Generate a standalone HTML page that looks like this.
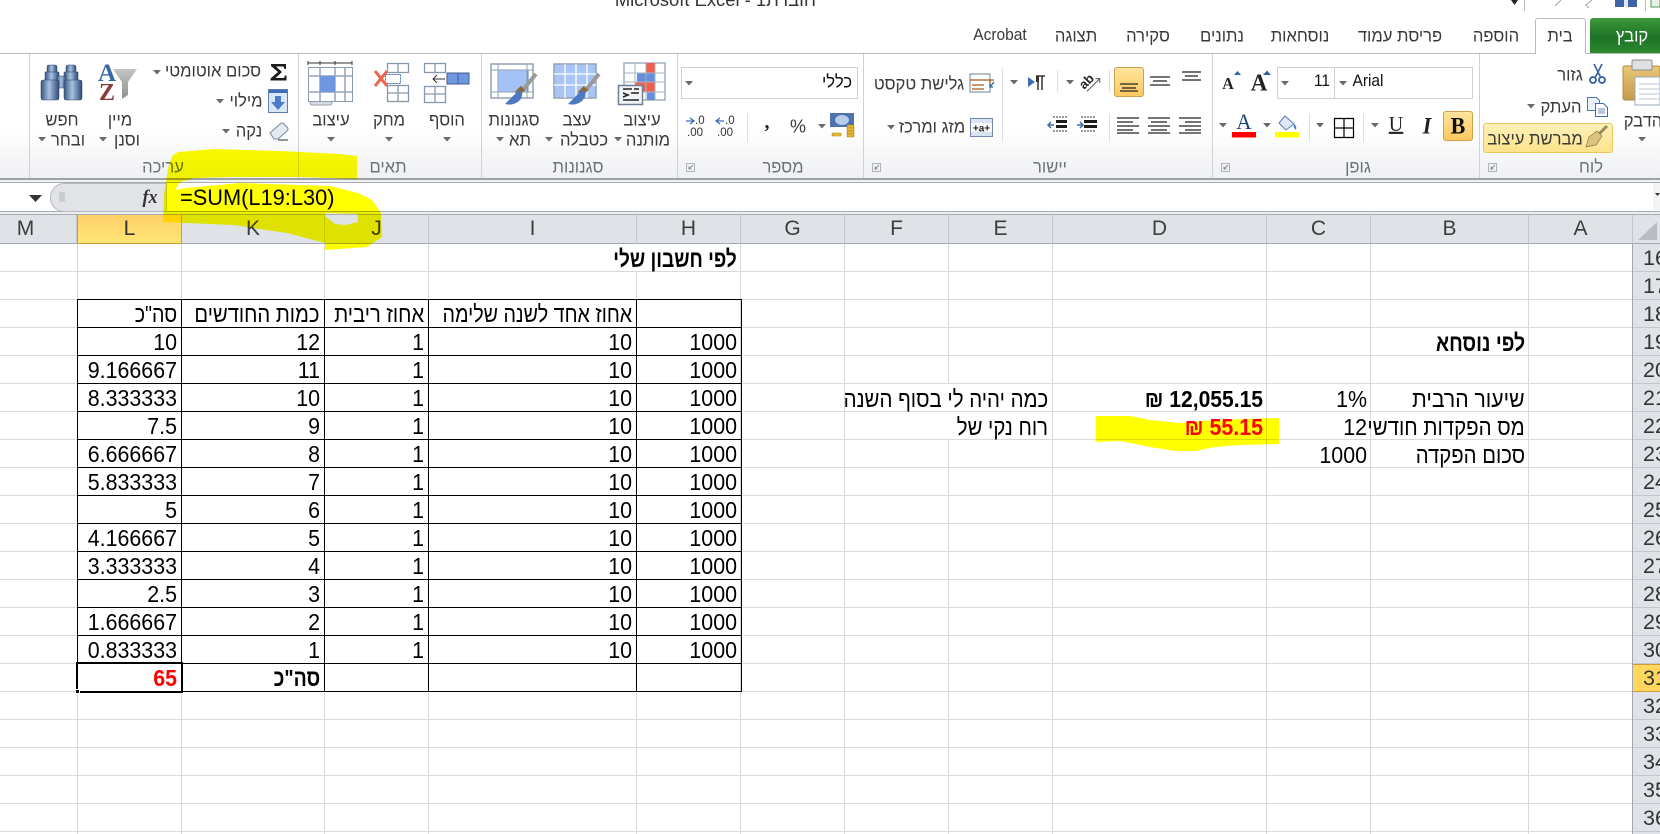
<!DOCTYPE html>
<html lang="he"><head><meta charset="utf-8"><title>Excel</title>
<style>
html,body{margin:0;padding:0;width:1660px;height:834px;overflow:hidden;background:#fff}
body{position:relative;font-family:"Liberation Sans","Noto Sans CJK SC",sans-serif}
div,span,table{box-sizing:border-box}
.x{position:absolute}
.c{position:absolute;white-space:nowrap;transform:translate(-50%,-50%) scaleY(1.05);font-size:16.6px;line-height:18px;color:#3a3a3a;direction:rtl}
.la{font-size:15.5px}
.g{color:#6d7278}
.v{position:absolute;top:244px;height:590px;width:1px;background:#d9d9d9}
.ch{position:absolute;top:215px;height:29px;background:#dfe2e6;border-right:1px solid #c3c6ca;border-bottom:1px solid #a6aaae;color:#3d3d3d;font-size:21px;line-height:28px;text-align:center}
.rh{height:28px;background:#dfe2e6;border-bottom:1px solid #c3c6ca;padding-left:10px;font-size:21.5px;line-height:28px;color:#333;white-space:nowrap}
.s{position:absolute;white-space:nowrap;font-size:21.4px;line-height:28px;height:28px;margin-top:1px;color:#000;direction:rtl;transform:scale(var(--x,1),1.1);transform-origin:100% 70%}
table{position:absolute;left:77px;top:299px;border-collapse:collapse;table-layout:fixed;width:664px;font-size:21.4px;direction:ltr}
td{border:1px solid #000;height:27px;padding:0 4px 0 0;text-align:right;line-height:27px;white-space:nowrap;direction:rtl}
td i{font-style:normal;display:inline-block;position:relative;top:2px;transform:scale(var(--x,1),1.1);transform-origin:100% 70%}
</style></head><body>

<div class="x" style="right:844px;top:-11px;font-size:18.4px;line-height:22px;color:#333;direction:rtl;white-space:nowrap">חוברת1 - Microsoft Excel</div>

<div class="x" style="left:0;top:53px;width:1660px;height:125px;background:linear-gradient(#fff 0,#fff 60%,#eff0f2 100%);border-top:1px solid #b9b9b9"></div>
<div class="x" style="left:0;top:178px;width:1660px;height:2px;background:#9da1a5"></div>
<div class="x" style="left:0;top:180px;width:1660px;height:2px;background:#f0f1f2"></div>
<div class="x" style="left:0;top:182px;width:1660px;height:30px;background:#fff;border-top:1px solid #a9adb1;border-bottom:1px solid #a9adb1"></div>
<div class="x" style="left:0;top:212px;width:1660px;height:3px;background:#eceef0;border-bottom:1px solid #a9adb1"></div>

<div class="x" style="left:1590px;top:18px;width:70px;height:35px;background:linear-gradient(#3c9a3c,#1f7226 55%,#2a8a2e);border-radius:3px 0 0 0"></div>
<div class="x" style="left:1535px;top:18px;width:51px;height:36px;background:#fff;border:1px solid #b9b9b9;border-bottom:0;border-radius:3px 3px 0 0"></div>
<span class="c" style="left:1632px;top:36px;color:#fff">קובץ</span>
<span class="c" style="left:1560px;top:36px">בית</span>
<span class="c" style="left:1496px;top:36px">הוספה</span>
<span class="c" style="left:1400px;top:36px">פריסת עמוד</span>
<span class="c" style="left:1300px;top:36px">נוסחאות</span>
<span class="c" style="left:1222px;top:36px">נתונים</span>
<span class="c" style="left:1148px;top:36px">סקירה</span>
<span class="c" style="left:1076px;top:36px">תצוגה</span>
<span class="c la" style="left:1000px;top:36px;direction:ltr">Acrobat</span>

<span class="c" style="left:213px;top:71px">סכום אוטומטי</span>
<span class="c" style="left:246px;top:101px">מילוי</span>
<span class="c" style="left:249px;top:131px">נקה</span>
<span class="c" style="left:120px;top:120px">מיין</span>
<span class="c" style="left:127px;top:140px">וסנן</span>
<span class="c" style="left:62px;top:120px">חפש</span>
<span class="c" style="left:68px;top:140px">ובחר</span>
<span class="c g" style="left:163px;top:167px">עריכה</span>
<span class="c" style="left:331px;top:120px">עיצוב</span>
<span class="c" style="left:389px;top:120px">מחק</span>
<span class="c" style="left:447px;top:120px">הוסף</span>
<span class="c g" style="left:388px;top:167px">תאים</span>
<span class="c" style="left:514px;top:120px">סגנונות</span>
<span class="c" style="left:520px;top:140px">תא</span>
<span class="c" style="left:577px;top:120px">עצב</span>
<span class="c" style="left:584px;top:140px">כטבלה</span>
<span class="c" style="left:642px;top:120px">עיצוב</span>
<span class="c" style="left:648px;top:140px">מותנה</span>
<span class="c g" style="left:578px;top:167px">סגנונות</span>

<div class="x" style="left:681px;top:67px;width:177px;height:32px;background:#fff;border:1px solid #cdd1d6"></div>
<span class="c" style="left:837px;top:82px;color:#111">כללי</span>
<span class="c" style="left:798px;top:126px;font-size:18px;direction:ltr">%</span>
<span class="c" style="left:767px;top:122px;font:bold 20px 'Liberation Serif',serif;color:#222">,</span>
<span class="c g" style="left:783px;top:167px">מספר</span>

<span class="c" style="left:919px;top:84px">גלישת טקסט</span>
<span class="c" style="left:932px;top:127px">מזג ומרכז</span>
<span class="c g" style="left:1050px;top:167px">יישור</span>

<div class="x" style="left:1114px;top:67px;width:30px;height:30px;background:linear-gradient(#fee49c,#fdc95f);border:1px solid #c9a24f;border-radius:3px"></div>
<div class="x" style="left:1443px;top:111px;width:30px;height:30px;background:linear-gradient(#fee49c,#fdc95f);border:1px solid #c9a24f;border-radius:3px"></div>
<div class="x" style="left:1483px;top:123px;width:130px;height:30px;background:linear-gradient(#fdf0b8,#fde38c);border:1px solid #e9c95f;border-radius:3px"></div>

<div class="x" style="left:1277px;top:67px;width:196px;height:32px;background:#fff;border:1px solid #cdd1d6"></div>
<div class="x" style="left:1334px;top:67px;width:1px;height:32px;background:#cdd1d6"></div>
<span class="c la" style="left:1322px;top:82px;color:#111;direction:ltr">11</span>
<span class="c la" style="left:1368px;top:82px;color:#111;direction:ltr">Arial</span>
<span class="c" style="left:1458px;top:126px;font:bold 22px 'Liberation Serif',serif;color:#111;direction:ltr">B</span>
<span class="c" style="left:1427px;top:126px;font:italic bold 22px 'Liberation Serif',serif;color:#222;direction:ltr">I</span>
<span class="c" style="left:1396px;top:125px;font:20px 'Liberation Serif',serif;color:#222;direction:ltr;text-decoration:underline">U</span>
<span class="c" style="left:1244px;top:122px;font:21px 'Liberation Serif',serif;color:#1d3f7a;direction:ltr">A</span>
<span class="c" style="left:1228px;top:85px;font:bold 16px 'Liberation Serif',serif;color:#222;direction:ltr">A</span>
<span class="c" style="left:1259px;top:83px;font:bold 23px 'Liberation Serif',serif;color:#222;direction:ltr">A</span>
<span class="c g" style="left:1358px;top:167px">גופן</span>

<span class="c" style="left:1570px;top:75px">גזור</span>
<span class="c" style="left:1561px;top:107px">העתק</span>
<span class="c" style="left:1535px;top:139px">מברשת עיצוב</span>
<span class="c" style="left:1643px;top:121px">הדבק</span>
<span class="c g" style="left:1591px;top:167px">לוח</span>

<div class="x" style="left:50px;top:183px;width:116px;height:29px;background:#e1e3e6;border:1px solid #b5b8bc;border-right:0;border-radius:14px 0 0 14px"></div>
<div class="x" style="left:59px;top:192px;width:6px;height:10px;background:#c8cbcf;border-radius:2px"></div>
<span class="c" style="left:150px;top:197px;font:italic bold 18px 'Liberation Serif',serif;color:#333;direction:ltr">fx</span>
<div class="x" style="left:166px;top:183px;width:1px;height:29px;background:#c3c6ca"></div>
<div class="x" style="left:180px;top:185px;font-size:21.8px;line-height:26px;color:#000;white-space:nowrap">=SUM(L19:L30)</div>

<div class="ch" style="left:0;width:77px;padding-right:25px">M</div>
<div class="ch" style="left:77px;width:105px;background:linear-gradient(#fdd06a,#ffe574);border:1px solid #d29b3a;border-top:0;color:#333">L</div>
<div class="ch" style="left:182px;width:143px">K</div>
<div class="ch" style="left:325px;width:104px">J</div>
<div class="ch" style="left:429px;width:208px">I</div>
<div class="ch" style="left:637px;width:104px">H</div>
<div class="ch" style="left:741px;width:104px">G</div>
<div class="ch" style="left:845px;width:104px">F</div>
<div class="ch" style="left:949px;width:104px">E</div>
<div class="ch" style="left:1053px;width:214px">D</div>
<div class="ch" style="left:1267px;width:104px">C</div>
<div class="ch" style="left:1371px;width:158px">B</div>
<div class="ch" style="left:1529px;width:104px">A</div>
<div class="ch" style="left:1633px;width:27px;border-right:0"></div>

<div class="x" style="left:0;top:244px;width:1632px;height:590px;background:repeating-linear-gradient(to bottom,#fff 0,#fff 27px,#d9d9d9 27px,#d9d9d9 28px)"></div>
<div class="v" style="left:77px"></div><div class="v" style="left:181px"></div><div class="v" style="left:324px"></div><div class="v" style="left:428px"></div><div class="v" style="left:636px"></div><div class="v" style="left:740px"></div><div class="v" style="left:844px"></div><div class="v" style="left:948px"></div><div class="v" style="left:1052px"></div><div class="v" style="left:1266px"></div><div class="v" style="left:1370px"></div><div class="v" style="left:1528px"></div>
<div class="x" style="left:636px;top:244px;width:1px;height:27px;background:#fff"></div>
<div class="x" style="left:948px;top:384px;width:1px;height:27px;background:#fff"></div>
<div class="x" style="left:948px;top:412px;width:1px;height:27px;background:#fff"></div>

<div class="x" style="left:1632px;top:244px;width:28px;height:590px;overflow:hidden;border-left:1px solid #a4a8ac;background:#dfe2e6">
<div class="rh">16</div><div class="rh">17</div><div class="rh">18</div><div class="rh">19</div><div class="rh">20</div><div class="rh">21</div><div class="rh">22</div><div class="rh">23</div><div class="rh">24</div><div class="rh">25</div><div class="rh">26</div><div class="rh">27</div><div class="rh">28</div><div class="rh">29</div><div class="rh">30</div><div class="rh" style="background:#ffd75e;border-top:1px solid #cf9a38;border-bottom:1px solid #cf9a38;line-height:26px">31</div><div class="rh">32</div><div class="rh">33</div><div class="rh">34</div><div class="rh">35</div><div class="rh">36</div>
</div>

<span class="s" style="right:923px;top:245px;font-weight:bold;--x:.89">לפי חשבון שלי</span>
<span class="s" style="right:135px;top:329px;font-weight:bold;--x:.91">לפי נוסחא</span>
<span class="s" style="right:135px;top:385px;--x:.99">שיעור הרבית</span>
<span class="s" style="right:293px;top:385px;direction:ltr">1%</span>
<span class="s" style="right:397px;top:385px;direction:ltr;font-weight:bold;--x:.985">₪ 12,055.15</span>
<span class="s" style="right:612px;top:385px;--x:.955">כמה יהיה לי בסוף השנה</span>
<span class="s" style="right:135px;top:413px;--x:.955">מס הפקדות חודשי</span>
<span class="s" style="right:293px;top:413px;direction:ltr">12</span>
<span class="s" style="right:397px;top:413px;direction:ltr;font-weight:bold;color:#f00">₪ 55.15</span>
<span class="s" style="right:612px;top:413px;--x:.95">רוח נקי של</span>
<span class="s" style="right:135px;top:441px;--x:.95">סכום הפקדה</span>
<span class="s" style="right:293px;top:441px;direction:ltr">1000</span>

<table>
<colgroup><col style="width:104px"><col style="width:143px"><col style="width:104px"><col style="width:208px"><col style="width:105px"></colgroup>
<tr><td><i style="--x:.92">סה"כ</i></td><td><i style="--x:.944">כמות החודשים</i></td><td><i style="--x:.945">אחוז ריבית</i></td><td><i style="--x:.92">אחוז אחד לשנה שלימה</i></td><td></td></tr>
<tr><td><i>10</i></td><td><i>12</i></td><td><i>1</i></td><td><i>10</i></td><td><i>1000</i></td></tr>
<tr><td><i>9.166667</i></td><td><i>11</i></td><td><i>1</i></td><td><i>10</i></td><td><i>1000</i></td></tr>
<tr><td><i>8.333333</i></td><td><i>10</i></td><td><i>1</i></td><td><i>10</i></td><td><i>1000</i></td></tr>
<tr><td><i>7.5</i></td><td><i>9</i></td><td><i>1</i></td><td><i>10</i></td><td><i>1000</i></td></tr>
<tr><td><i>6.666667</i></td><td><i>8</i></td><td><i>1</i></td><td><i>10</i></td><td><i>1000</i></td></tr>
<tr><td><i>5.833333</i></td><td><i>7</i></td><td><i>1</i></td><td><i>10</i></td><td><i>1000</i></td></tr>
<tr><td><i>5</i></td><td><i>6</i></td><td><i>1</i></td><td><i>10</i></td><td><i>1000</i></td></tr>
<tr><td><i>4.166667</i></td><td><i>5</i></td><td><i>1</i></td><td><i>10</i></td><td><i>1000</i></td></tr>
<tr><td><i>3.333333</i></td><td><i>4</i></td><td><i>1</i></td><td><i>10</i></td><td><i>1000</i></td></tr>
<tr><td><i>2.5</i></td><td><i>3</i></td><td><i>1</i></td><td><i>10</i></td><td><i>1000</i></td></tr>
<tr><td><i>1.666667</i></td><td><i>2</i></td><td><i>1</i></td><td><i>10</i></td><td><i>1000</i></td></tr>
<tr><td><i>0.833333</i></td><td><i>1</i></td><td><i>1</i></td><td><i>10</i></td><td><i>1000</i></td></tr>
<tr><td style="color:#f00;font-weight:bold"><i>65</i></td><td style="font-weight:bold"><i style="--x:.91">סה"כ</i></td><td></td><td></td><td></td></tr>
</table>
<div class="x" style="left:76px;top:662px;width:107px;height:31px;border:2px solid #000;box-shadow:inset 0 0 0 1px #fff"></div>
<div class="x" style="left:75px;top:689px;width:5px;height:5px;background:#000;border:1px solid #fff"></div>

<svg class="x" style="left:0;top:0" width="1660" height="834" viewBox="0 0 1660 834" xmlns="http://www.w3.org/2000/svg">
<defs>
<path id="a" d="M-4-2h8l-4 4.500z" fill="#6a6a6a"/>
<g id="l"><rect x=".5" y=".5" width="8" height="8" fill="none" stroke="#b0b3b7"/><path d="M7 2L3 6M3 3.500V6H5.500" fill="none" stroke="#8a8d91"/></g>
<linearGradient id="bn" x1="0" x2="1" y1="0" y2="0"><stop offset="0" stop-color="#36557f"/><stop offset=".45" stop-color="#a9c1e2"/><stop offset="1" stop-color="#2e4a78"/></linearGradient>
<linearGradient id="fn" x1="0" x2="0" y1="0" y2="1"><stop offset="0" stop-color="#c3c6c2"/><stop offset="1" stop-color="#8d918c"/></linearGradient>
<linearGradient id="gold" x1="0" x2="0" y1="0" y2="1"><stop offset="0" stop-color="#e9c877"/><stop offset="1" stop-color="#c49a4a"/></linearGradient>
</defs>

<path d="M1511 0h7l-3.500 5z" fill="#222"/><path d="M1524.500 0v11" stroke="#bbb"/>
<path d="M1561 0l-6 6M1592 0l-6 5 3 3" stroke="#9aa" fill="none"/>
<rect x="1615" y="-4" width="22" height="11" fill="#3f62a8"/><rect x="1624" y="0" width="4" height="7" fill="#dfe8f5"/>
<path d="M1645.500 0v11" stroke="#bbb"/><rect x="1651" y="-3" width="9" height="10" fill="#e8f3e8" stroke="#4a9a4a"/>

<g stroke="#d0d3d6"><path d="M29.500 54v124M298.500 54v124M481.500 54v124M677.500 54v124M863.500 54v124M1212.500 54v124M1479.500 54v124"/>
<path d="M1002.500 68v74M1057.500 70v22M1109.500 70v22M1109.500 114v28M747.500 114v28M1309.500 114v28M1363.500 114v28" stroke="#dcdee1"/></g>

<use href="#a" x="157" y="72"/><use href="#a" x="220" y="101"/><use href="#a" x="226" y="131"/><use href="#a" x="103" y="139"/><use href="#a" x="42" y="139"/><use href="#a" x="331" y="139"/><use href="#a" x="389" y="139"/><use href="#a" x="447" y="139"/><use href="#a" x="500" y="139"/><use href="#a" x="549" y="139"/><use href="#a" x="618" y="139"/><use href="#a" x="689" y="83"/><use href="#a" x="822" y="126"/><use href="#a" x="1014" y="82"/><use href="#a" x="1070" y="82"/><use href="#a" x="891" y="127"/><use href="#a" x="1285" y="83"/><use href="#a" x="1343" y="83"/><use href="#a" x="1375" y="125"/><use href="#a" x="1320" y="125"/><use href="#a" x="1267" y="125"/><use href="#a" x="1223" y="125"/><use href="#a" x="1531" y="106"/><use href="#a" x="1642" y="139"/>
<path d="M29 195h13l-6.500 7z" fill="#333"/>

<use href="#l" x="686" y="163"/><use href="#l" x="872" y="163"/><use href="#l" x="1221" y="163"/><use href="#l" x="1488" y="163"/>

<path d="M271 64h15v5h-1.500l-1-2.500h-7.500l6 5.500-6.500 6h8.500l1-2.500h1.500v5h-16v-2l7.500-6.500-7-6z" fill="#1c1c1c"/>
<rect x="268.500" y="89.500" width="19" height="23" fill="#d9e6f7" stroke="#5b7fae"/><rect x="269" y="90" width="18" height="3" fill="#3e6db5"/>
<path d="M275 96h6v6h4l-7 8-7-8h4z" fill="#4a7cc7"/>
<path d="M270 133l10-9q2-2 4 0l3 3q2 2 0 4l-9 8h-4z" fill="#e3e9f1" stroke="#7c8a9c"/><path d="M278 140h10" stroke="#333"/>
<text x="98" y="81" font-family="Liberation Serif" font-weight="bold" font-size="25" fill="#3a66a8">A</text>
<text x="99" y="100" font-family="Liberation Serif" font-weight="bold" font-size="24" fill="#8c3b3b">Z</text>
<path d="M113 69h24l-9 13v13l-6 4V82z" fill="url(#fn)"/>
<g fill="url(#bn)" stroke="#2d4468" stroke-width=".5"><rect x="47" y="65" width="10" height="14" rx="2"/><rect x="66" y="65" width="10" height="14" rx="2"/><rect x="45" y="72" width="14" height="10"/><rect x="64" y="72" width="14" height="10"/><rect x="57" y="76" width="9" height="12"/><rect x="41" y="80" width="18" height="20" rx="2"/><rect x="64" y="80" width="18" height="20" rx="2"/></g>

<path d="M308 63h44M308 61v4M320 61v4M335 61v4M352 61v4" stroke="#333" fill="none"/>
<rect x="310" y="101" width="22" height="4" rx="2" fill="#d5dae2" stroke="#97a3b3"/>
<rect x="308.500" y="67.500" width="44" height="34" fill="#fff" stroke="#8b9bb0"/>
<path d="M308 76h44M308 92h44M320 68v34M335 68v34M345 68v34" stroke="#95a4b8" stroke-width="1.500"/>
<rect x="320" y="76" width="15" height="16" fill="#6f97e0"/>

<g fill="#fff" stroke="#8798ae" stroke-width="1.300"><rect x="387.500" y="63.500" width="21" height="9"/><path d="M398 63v10"/><rect x="387.500" y="85.500" width="21" height="16"/><path d="M398 85v16M387 93h21"/></g>
<rect x="385.500" y="74.500" width="15" height="9" fill="none" stroke="#3e6db5" stroke-dasharray="2 1"/>
<path d="M375 71l12 15M387 71l-12 15" stroke="#f1624e" stroke-width="3"/>
<g fill="#fff" stroke="#8798ae" stroke-width="1.300"><rect x="424.500" y="63.500" width="21" height="9"/><path d="M435 63v10"/><rect x="424.500" y="86.500" width="21" height="16"/><path d="M435 86v16M424 94h21"/></g>
<rect x="447" y="73" width="22" height="11" fill="#6f97e0" stroke="#3f5f93"/><path d="M458 73v11" stroke="#3f5f93"/>
<path d="M433 79h12M437 75l-4 4 4 4" stroke="#333" fill="none"/>

<rect x="491" y="64" width="42" height="34" fill="#fff" stroke="#92a2b6" stroke-width="1.500"/>
<rect x="498" y="70" width="30" height="22" fill="#a4c2f6" stroke="#5f86c9"/>
<path d="M491 70h42M491 92h42M498 64v34M527 64v34" stroke="#92a2b6"/>
<path d="M536 74l-14 17" stroke="#9b9b96" stroke-width="4"/><path d="M523 88l-6 6" stroke="#8a6a3a" stroke-width="6"/><path d="M519 90l-14 14q8 2 14-3 4-4 3-9z" fill="#4d79c2"/>
<rect x="554" y="64" width="42" height="34" fill="#a9c5f5" stroke="#92a2b6" stroke-width="1.500"/>
<path d="M554 74h42M554 85h42M565 64v34M576 64v34M587 64v34" stroke="#fff" stroke-width="1.300"/>
<path d="M599 74l-14 17" stroke="#9b9b96" stroke-width="4"/><path d="M586 88l-6 6" stroke="#8a6a3a" stroke-width="6"/><path d="M582 90l-14 14q8 2 14-3 4-4 3-9z" fill="#4d79c2"/>
<rect x="624" y="63" width="41" height="37" fill="#fff" stroke="#92a2b6" stroke-width="1.300"/>
<rect x="646" y="63" width="9" height="10" fill="#f2604c"/><rect x="637" y="73" width="18" height="9" fill="#6690dc"/><rect x="635" y="82" width="20" height="10" fill="#f2604c"/><rect x="647" y="92" width="8" height="8" fill="#6690dc"/>
<path d="M624 73h41M624 82h41M624 92h41M635 63v37M646 63v37M655 63v37" stroke="#a5b2c2"/>
<rect x="618.500" y="85.500" width="24" height="19" fill="#f3f4f6" stroke="#6e7f96" stroke-width="1.500"/>
<path d="M623 89h9M634 89h5M623 93l5 2-5 2M631 93h8M623 100h16" stroke="#222" stroke-width="1.500" fill="none"/>

<rect x="830" y="113" width="24" height="14" fill="#4a73b0"/><ellipse cx="842" cy="120" rx="7" ry="5" fill="#b7cce8"/>
<g fill="#e7b836" stroke="#a97f1d" stroke-width=".6"><rect x="847" y="125" width="7" height="3" rx="1"/><rect x="847" y="128" width="7" height="3" rx="1"/><rect x="847" y="131" width="7" height="3" rx="1"/><rect x="847" y="134" width="7" height="3" rx="1"/><rect x="832" y="133" width="9" height="3" rx="1"/></g>

<g font-family="Liberation Sans" font-size="11.500" fill="#333">
<text x="725" y="124">.0</text><text x="717" y="136">.00</text>
<text x="695" y="124">.0</text><text x="687" y="136">.00</text></g>
<path d="M716 121h8M720 118l-4 3 4 3" stroke="#3e6db5" fill="none" stroke-width="1.300"/>
<path d="M686 121h8M690 118l4 3-4 3" stroke="#3e6db5" fill="none" stroke-width="1.300"/>

<g fill="none" stroke-width="1.200"><path d="M970 74h20v18h-20z" stroke="#8a97a8"/><path d="M970 80h24M990 80l0 5" stroke="#a25b1f"/><path d="M972 85h12M972 89h12" stroke="#a25b1f"/><path d="M994 82l-4 5M990 84v3h3" stroke="#2f5fa5"/></g>
<rect x="970.500" y="118.500" width="22" height="18" fill="#d9e4f3" stroke="#7089ad"/>
<rect x="971" y="123" width="21" height="9" fill="#fff"/>
<text x="981.500" y="131.500" text-anchor="middle" font-family="Liberation Sans" font-weight="bold" font-size="10" fill="#222">+a+</text>
<path d="M1028 77l7 5-7 5z" fill="#3e6db5"/><path d="M1036 76h9M1038 76v14M1042 76v14" stroke="#333" stroke-width="1.500"/><path d="M1036 76h3v6h-3z" fill="#333"/>
<g transform="rotate(-45 1087 80)"><text x="1078" y="85" font-family="Liberation Sans" font-weight="bold" font-size="13" fill="#222">ab</text><path d="M1079 88h18M1094 85l3 3-3 3" stroke="#555" fill="none"/></g>

<g stroke="#222" stroke-width="1.200" fill="none">
<path d="M1120 84h18M1122 88h14M1120 91h18"/>
<path d="M1150 77h20M1153 81h14M1150 85h20"/>
<path d="M1182 72h19M1185 76h13M1182 80h19"/>
<path d="M1117 118h22M1117 122h16M1117 126h22M1117 130h16M1117 133h22"/>
<path d="M1148 118h22M1151 122h16M1148 126h22M1151 130h16M1148 133h22"/>
<path d="M1179 118h22M1185 122h16M1179 126h22M1185 130h16M1179 133h22"/>
</g>
<g fill="#1c1c1c"><rect x="1056" y="120" width="11" height="3"/><rect x="1056" y="125" width="11" height="3"/><rect x="1084" y="120" width="13" height="3"/><rect x="1084" y="125" width="13" height="3"/></g>
<path d="M1053 117h14M1053 131h14M1081 117h15M1081 131h15" stroke="#333" stroke-dasharray="2 1"/>
<path d="M1048 125h6M1051 122l-3 3 3 3" stroke="#3e6db5" fill="none" stroke-width="1.500"/>
<path d="M1077 125h6M1080 122l3 3-3 3" stroke="#3e6db5" fill="none" stroke-width="1.500"/>

<path d="M1234 75h7l-3.500-4z M1263 75h8l-4-4.500z" fill="#2f5fa5"/>
<path d="M1334.500 118.500h19v19h-19zM1344 118v19M1334 128h19" fill="none" stroke="#000" stroke-width="1.200"/>
<rect x="1232" y="132" width="24" height="5.500" fill="#f00"/>
<rect x="1275" y="132" width="24" height="5.500" fill="#ff0"/>
<path d="M1285 116l-6 7 7 7 8-6z" fill="#dfe9f6" stroke="#5c7fb1"/><path d="M1294 124q3 2 2 6-3-2-2-6z" fill="#4a7cc7"/>

<path d="M1594 64l7 14M1602 64l-7 14" stroke="#3a5f96" stroke-width="1.600"/><circle cx="1593" cy="80" r="3" fill="none" stroke="#2f5fa5" stroke-width="1.800"/><circle cx="1602" cy="80" r="3" fill="none" stroke="#2f5fa5" stroke-width="1.800"/>
<path d="M1587.500 97.500h9l3 3v10h-12z" fill="#eef3fa" stroke="#4e74a8"/><path d="M1595.500 103.500h8l4 4v9h-12z" fill="#fff" stroke="#3e6db5"/><path d="M1598 109h7M1598 111h7M1598 113h7" stroke="#6c8fc2"/>
<path d="M1607 126l-8 8" stroke="#9b8b5f" stroke-width="3"/><path d="M1589 137l8-6 5 5-6 9q-6 1-10 2 1-4 3-10z" fill="#dcc37f" stroke="#8a7a46" stroke-width=".7"/>
<rect x="1623" y="66" width="37" height="34" rx="2" fill="url(#gold)" stroke="#b08b44"/>
<rect x="1632" y="60" width="20" height="10" rx="1.500" fill="#dfe0e2" stroke="#8a8d91"/>
<rect x="1635" y="77" width="25" height="28" fill="#fff" stroke="#9ca8ba"/>
<path d="M1639 84h21M1639 89h21M1639 94h21M1639 99h21" stroke="#bcc6d4"/>

<path d="M1657 222v18h-19z" fill="#b9bcc0"/>
<rect x="1653" y="183" width="7" height="28" fill="#f3f4f5"/><path d="M1655 193h5l-2.500 3z" fill="#333"/>
</svg>

<svg class="x" style="left:0;top:0;mix-blend-mode:multiply" width="1660" height="834" viewBox="0 0 1660 834" xmlns="http://www.w3.org/2000/svg">
<path fill="#ff0" fill-rule="evenodd" d="M163 222L164 195L168 168L172 156L178 152L215 149L280 151L340 154L357 156L357 179L300 177L233 177L195 178L180 182L175 190L186 188L240 183L330 186L358 193L372 200L381 213L382 237L367 247L340 249L325 250L325 243L287 233L233 225L187 223Z M325 213L358 214L358 222L346 225L335 224L325 216Z"/>
<path fill="#ff0" d="M1096 416L1130 416L1150 420L1179 423L1215 420L1279 418L1279 444L1240 445L1215 447L1195 451L1175 451L1150 447L1120 441L1096 442Z"/>
</svg>
</body></html>
